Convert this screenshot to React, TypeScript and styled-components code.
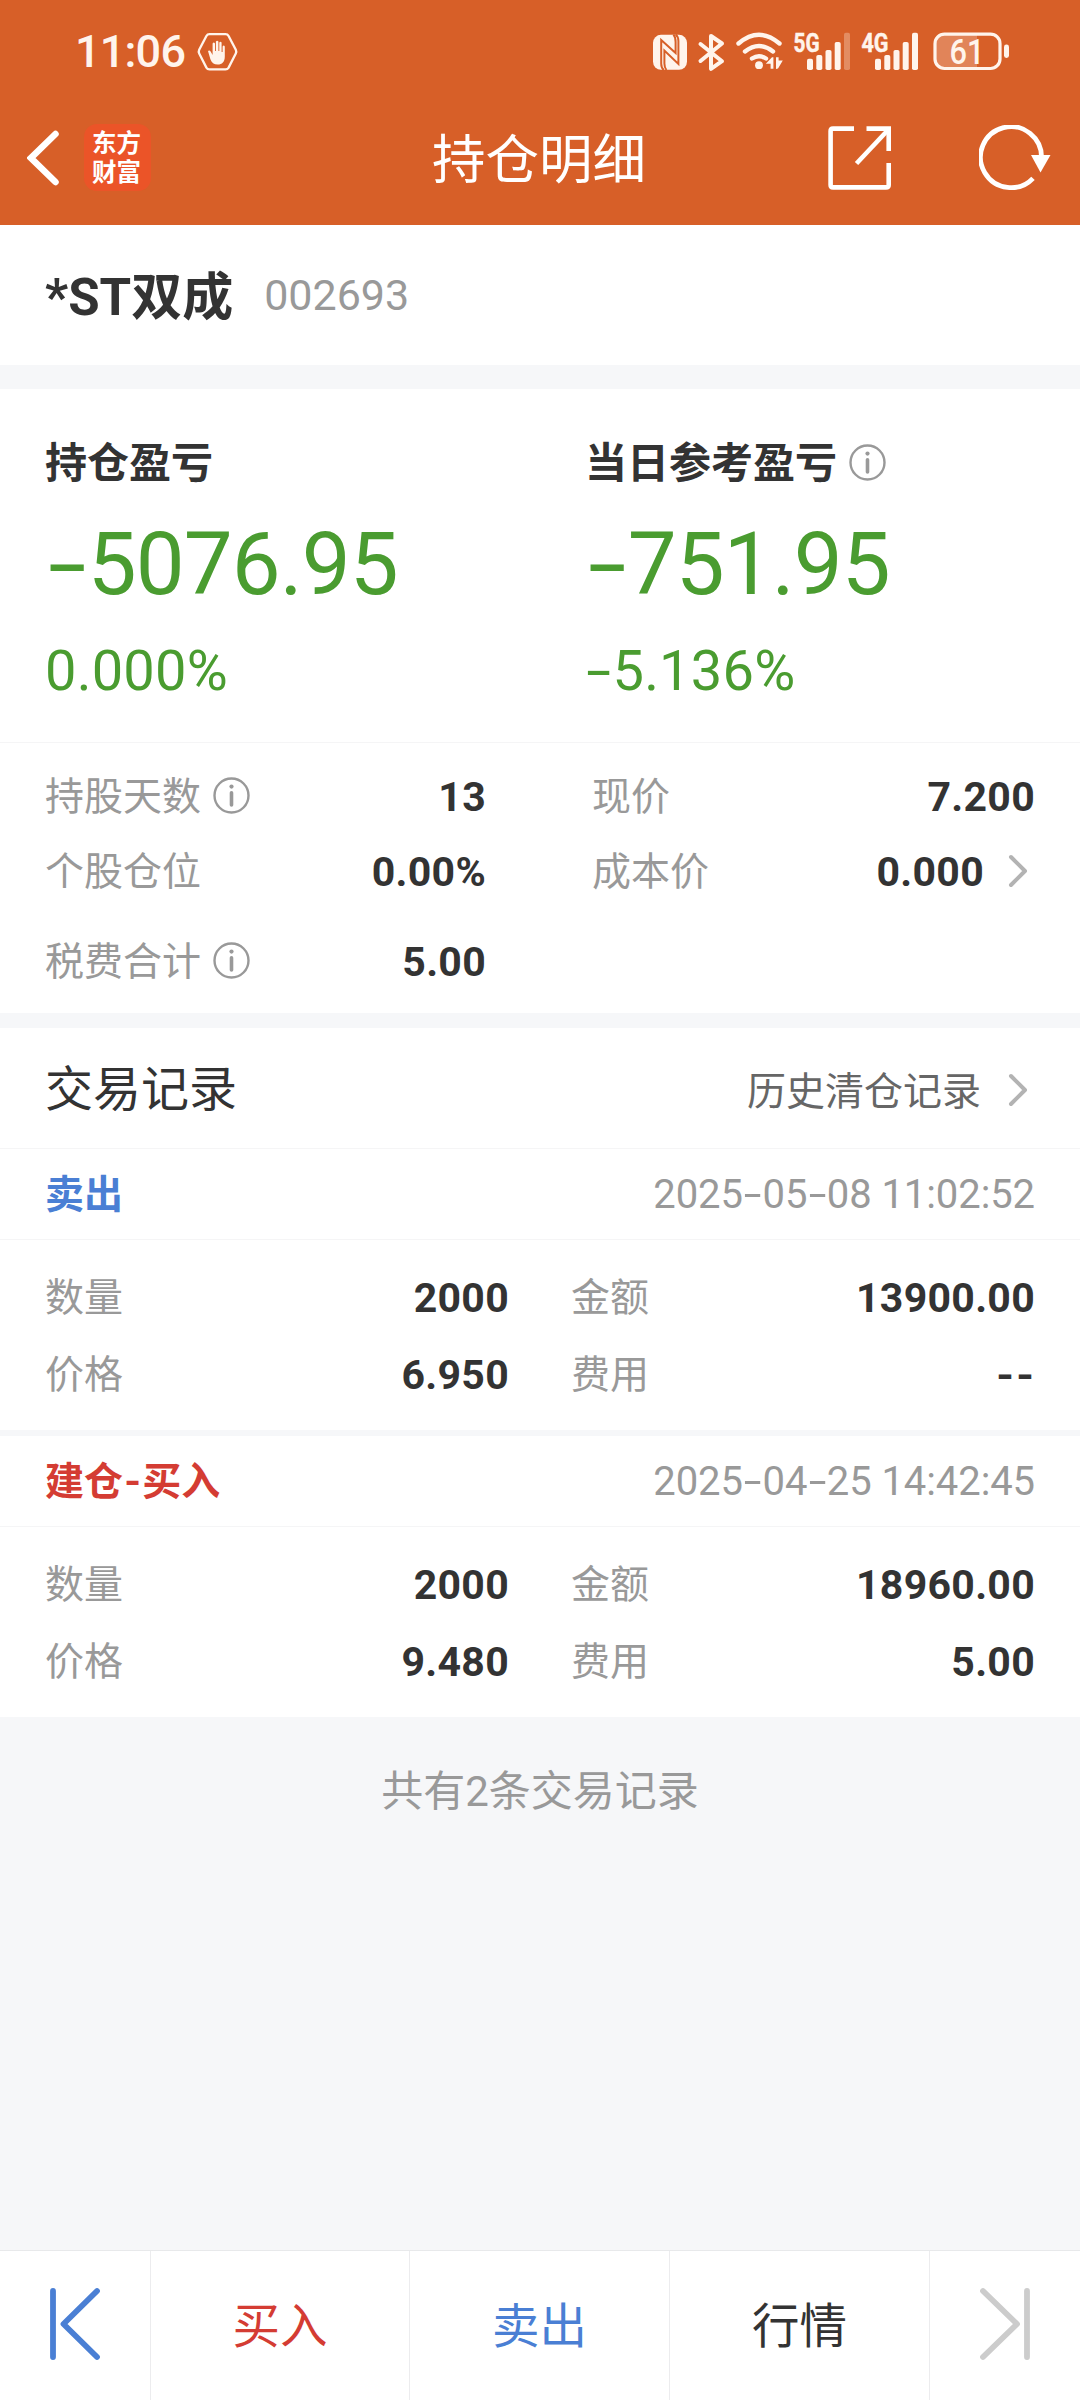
import React from "react";
import styled, { createGlobalStyle } from "styled-components";

const colors = {
  brand: "#d75f28",
  page: "#f6f7f9",
  ink: "#333333",
  muted: "#999999",
  link: "#666666",
  line: "#f5f5f6",
  green: "#4a9c30",
  blue: "#4a7fd4",
  red: "#d43c33",
  status: "#fff4ec",
};

const GlobalStyle = createGlobalStyle`
  * { box-sizing: border-box; }
  body {
    margin: 0;
    background: ${colors.page};
    color: ${colors.ink};
    font-family: Roboto, "Noto Sans CJK SC", sans-serif;
  }
`;

const Screen = styled.div`
  width: 1080px;
  height: 2400px;
  display: flex;
  flex-direction: column;
  background: ${colors.page};
  overflow: hidden;
`;

const Header = styled.header`
  height: 225px;
  background: ${colors.brand};
  display: flex;
  flex-direction: column;
  color: #fff;
`;

const StatusBar = styled.div`
  height: 103px;
  padding: 0 71px 0 75px;
  display: flex;
  justify-content: space-between;
  align-items: center;
`;

const StatusGroup = styled.div`
  display: flex;
  align-items: center;
  color: ${colors.status};
`;

const Clock = styled.span`
  font-size: 45px;
  font-weight: 500;
  line-height: 60px;
  letter-spacing: -0.8px;
  margin-right: 12px;
`;

const NavBar = styled.div`
  flex: 1;
  display: grid;
  grid-template-columns: 1fr auto 1fr;
  align-items: center;
  padding: 0 29px 13px 27px;
`;

const NavSide = styled.div<{ $end?: boolean }>`
  display: flex;
  align-items: center;
  justify-content: ${(p) => (p.$end ? "flex-end" : "flex-start")};
  gap: ${(p) => (p.$end ? "87px" : "25px")};
`;

const NavTitle = styled.h1`
  margin: 6px 0 0;
  font-size: 53.5px;
  line-height: 70px;
  font-weight: 400;
`;

const BrandLogo = styled.div`
  width: 67px;
  height: 67px;
  padding-right: 2px;
  border-radius: 13px;
  background: #eb5428;
  display: flex;
  flex-direction: column;
  align-items: center;
  justify-content: center;
  font-size: 24.5px;
  line-height: 29px;
  font-weight: 700;
`;

const StockBar = styled.section`
  height: 140px;
  background: #fff;
  padding: 0 45px;
  display: flex;
  align-items: center;
`;

const StockName = styled.h2`
  margin: 5px 0 0;
  font-size: 51px;
  line-height: 70px;
  font-weight: 700;
`;

const StockCode = styled.span`
  margin-left: 31px;
  font-size: 43px;
  line-height: 60px;
  color: ${colors.muted};
`;

const Gap = styled.div<{ $size: number }>`
  height: ${(p) => p.$size}px;
  background: ${colors.page};
`;

const ProfitSection = styled.section`
  height: 354px;
  padding: 45px 45px 0;
  background: #fff;
  border-bottom: 1px solid ${colors.line};
  display: grid;
  grid-template-columns: 540px 1fr;
`;

const ProfitLabel = styled.div`
  display: flex;
  align-items: center;
  font-size: 42px;
  line-height: 60px;
  font-weight: 700;
  svg { margin: 0 0 3px 12px; }
`;

const ProfitAmount = styled.div`
  margin-top: 20px;
  font-size: 87px;
  line-height: 100px;
  letter-spacing: -0.9px;
  color: ${colors.green};
`;

const ProfitRate = styled.div`
  margin-top: 27px;
  font-size: 56px;
  line-height: 60px;
  letter-spacing: 0.2px;
  color: ${colors.green};
`;

const DashBox = styled.span`
  display: inline-block;
  width: 0.49em;
  text-align: center;
`;

const DashMark = styled.span<{ $stretch: number }>`
  display: inline-block;
  transform: scaleX(${(p) => p.$stretch});
`;

const StatsSection = styled.section`
  height: 270px;
  padding: 16px 45px 0;
  background: #fff;
`;

const StatsRow = styled.div<{ $spaced?: boolean }>`
  display: grid;
  grid-template-columns: 441px 443px;
  justify-content: space-between;
  margin-top: ${(p) => (p.$spaced ? 15 : 0)}px;
`;

const Field = styled.div<{ $height?: number }>`
  height: ${(p) => p.$height ?? 75}px;
  display: flex;
  align-items: center;
  justify-content: space-between;
`;

const FieldLabel = styled.span`
  display: flex;
  align-items: center;
  font-size: 39px;
  line-height: 56px;
  color: ${colors.muted};
  svg { margin: 0 0 3px 12px; }
`;

const FieldValue = styled.span`
  display: flex;
  align-items: center;
  font-size: 41px;
  line-height: 54px;
  font-weight: 700;
  letter-spacing: 0.3px;
  svg { margin: 0 7px 2px 24px; }
`;

const RecordsHeader = styled.div`
  height: 121px;
  padding: 4px 45px 0;
  background: #fff;
  border-bottom: 1px solid ${colors.line};
  display: flex;
  align-items: center;
  justify-content: space-between;
`;

const RecordsTitle = styled.h3`
  margin: 0;
  font-size: 48px;
  line-height: 64px;
  font-weight: 400;
`;

const HistoryLink = styled.a`
  display: flex;
  align-items: center;
  padding-top: 3px;
  font-size: 39px;
  line-height: 56px;
  color: ${colors.link};
  svg { margin: 0 7px 4px 27px; }
`;

const RecordHead = styled.div`
  height: 91px;
  padding: 0 45px;
  background: #fff;
  border-bottom: 1px solid ${colors.line};
  display: flex;
  align-items: center;
  justify-content: space-between;
`;

const RecordType = styled.span<{ $color: string }>`
  padding-top: 2px;
  font-size: 39px;
  line-height: 56px;
  font-weight: 700;
  color: ${(p) => p.$color};
`;

const RecordTime = styled.time`
  padding-top: 2px;
  font-size: 40px;
  line-height: 56px;
  letter-spacing: -0.1px;
  color: ${colors.muted};
`;

const RecordBody = styled.div`
  height: 190px;
  padding: 19px 45px 0;
  background: #fff;
  display: grid;
  grid-template-columns: 464px 464px;
  grid-auto-rows: 77px;
  justify-content: space-between;
`;

const Summary = styled.p`
  flex: 1;
  margin: 0;
  padding-top: 45px;
  text-align: center;
  font-size: 42px;
  line-height: 60px;
  color: ${colors.muted};
`;

const TabBar = styled.nav`
  height: 150px;
  background: #fff;
  border-top: 1px solid #e8e9eb;
  display: grid;
  grid-template-columns: 151px 259px 260px 260px 150px;
`;

const Tab = styled.button<{ $color?: string }>`
  border: 0;
  border-right: 1px solid #ececee;
  padding: 2px 0 0;
  background: transparent;
  display: flex;
  align-items: center;
  justify-content: center;
  font-family: inherit;
  font-size: 47.5px;
  line-height: 64px;
  color: ${(p) => p.$color ?? colors.ink};
  svg { margin-bottom: 6px; }
  &:last-child { border-right: 0; }
`;

/** Figures with the wide dash used by the trading pages. */
const Figure = ({ text, stretch = 1.6 }: { text: string; stretch?: number }) => (
  <span>
    {text.split("").map((ch, i) =>
      ch === "-" ? (
        <DashBox key={i}>
          <DashMark $stretch={stretch}>-</DashMark>
        </DashBox>
      ) : (
        ch
      )
    )}
  </span>
);

const InfoIcon = () => (
  <svg width="37" height="37" viewBox="0 0 37 37" fill="none">
    <circle cx="18.5" cy="18.5" r="17" stroke="#999" strokeWidth="2.4" />
    <circle cx="18.5" cy="9.6" r="2.1" fill="#999" />
    <path d="M18.5 15.8V28" stroke="#999" strokeWidth="3.6" strokeLinecap="round" />
  </svg>
);

const ChevronIcon = () => (
  <svg width="20" height="34" viewBox="0 0 20 34" fill="none">
    <path d="M3 3L17 17L3 31" stroke="#b3b3b3" strokeWidth="4" strokeLinecap="round" strokeLinejoin="round" />
  </svg>
);

const BackIcon = () => (
  <svg width="32" height="56" viewBox="0 0 32 56" fill="none">
    <path d="M28.5 4L4 28L28.5 52" stroke="#fff" strokeWidth="6.5" strokeLinecap="round" />
  </svg>
);

const ShareIcon = () => (
  <svg width="64" height="64" viewBox="0 0 64 64" fill="none" stroke="#fff" strokeWidth="4.6">
    <path d="M26 2.6H5Q2.6 2.6 2.6 5V59Q2.6 61.4 5 61.4H58Q60.7 61.4 60.7 59V37" />
    <path d="M38.5 2.6H60.7V25" />
    <path d="M28.5 37.5L60 4" />
  </svg>
);

const RefreshIcon = () => (
  <svg width="72" height="66" viewBox="0 0 72 66" fill="none">
    <path d="M54 53.3A30.5 30.5 0 1 1 62.5 33" stroke="#fff" strokeWidth="4.8" />
    <path d="M52 30H71.5L61.5 47.5Z" fill="#fff" />
  </svg>
);

const PalmIcon = () => (
  <svg width="41" height="40" viewBox="0 0 41 40" fill="none">
    <path
      d="M12.5 2.2H28.5Q30.6 2.2 31.6 4L38.8 17.8Q39.7 19.7 38.8 21.5L31.6 35.6Q30.6 37.4 28.5 37.4H12.5Q10.4 37.4 9.4 35.6L2.2 21.5Q1.3 19.7 2.2 17.8L9.4 4Q10.4 2.2 12.5 2.2Z"
      stroke={colors.status}
      strokeWidth="2.3"
    />
    <path
      d="M11 19Q12.5 17.8 13.8 19.8L15.6 23V11.5Q16.8 9.6 18 11.5V19H18.9V9.6Q20.2 7.8 21.4 9.6V19H22.3V10.6Q23.5 9 24.6 10.6V20H25.6V14.4Q26.8 12.8 27.8 14.4V24.5C27.8 30 25 32.6 20.8 32.6C16.8 32.6 14.6 30.6 13.4 27.2Z"
      fill={colors.status}
    />
  </svg>
);

/** NFC, Bluetooth, Wi-Fi, two mobile signals and the battery, left to right. */
const SystemIcons = () => (
  <svg width="358" height="62" viewBox="0 -10 358 62" fill="none">
    <rect x="2" y="3.8" width="34" height="35" rx="8" fill={colors.status} />
    <path d="M12.8 39Q10.2 37 10.2 32.5V9L24.6 22V11Q24.6 6 22.4 3.6" stroke={colors.brand} strokeWidth="2" />
    <path d="M15.4 39Q13.4 36.5 13.4 32.5V19.5L27.4 33V10Q27.4 5.5 24.6 3.6" stroke={colors.brand} strokeWidth="2" />

    <path
      d="M49.5 13L71 30.2L60 37.8V5L71 12.5L49.5 30"
      stroke={colors.status}
      strokeWidth="4"
      strokeLinecap="round"
      strokeLinejoin="round"
    />

    <g stroke={colors.status} strokeWidth="4.4" strokeLinecap="round">
      <path d="M87.5 12.5Q108 -5 128.5 12.5" />
      <path d="M94 20.5Q108 9.5 122 20.5" />
      <path d="M101 27.5Q108 23.2 115 27.5" />
    </g>
    <circle cx="108" cy="34.2" r="3.9" fill={colors.status} />
    <path d="M114.8 32.8L121 26.2H122.4V37.8H119.6V32.8Z" fill={colors.status} />
    <path d="M125 26.2H127.6V29.6H131.8L127.2 37.2Q126.4 38 125 38Z" fill={colors.status} />

    <g fill={colors.status} stroke={colors.status} strokeWidth="0.5" fontFamily="Roboto" fontWeight="700" fontSize="25.5">
      <text x="142.5" y="20.5" textLength="26" lengthAdjust="spacingAndGlyphs">5G</text>
      <text x="210.5" y="20.5" textLength="27" lengthAdjust="spacingAndGlyphs">4G</text>
    </g>
    <g fill={colors.status}>
      <rect x="156" y="27.8" width="6" height="11.2" rx="1.8" />
      <rect x="165.3" y="24" width="6" height="15" rx="1.8" />
      <rect x="174.5" y="19" width="6" height="20" rx="1.8" />
      <rect x="183.7" y="11" width="6" height="28" rx="1.8" />
      <rect x="193" y="1.7" width="6" height="37.3" rx="1.8" opacity="0.3" />
      <rect x="224" y="27.8" width="6" height="11.2" rx="1.8" />
      <rect x="233.3" y="24" width="6" height="15" rx="1.8" />
      <rect x="242.5" y="19" width="6" height="20" rx="1.8" />
      <rect x="251.7" y="11" width="6" height="28" rx="1.8" />
      <rect x="261" y="1.7" width="6" height="37.3" rx="1.8" />
    </g>

    <path d="M291 3.5H326V37.5H291Q284 37.5 284 30V11.5Q284 3.5 291 3.5Z" fill={colors.status} opacity="0.25" />
    <rect x="284" y="3.2" width="65" height="34.3" rx="9.5" stroke={colors.status} strokeWidth="3.2" />
    <rect x="353" y="13.5" width="5" height="13.5" rx="2.4" fill={colors.status} />
    <text
      x="298.5"
      y="32.6"
      fontFamily="Roboto"
      fontWeight="500"
      fontSize="35"
      textLength="35"
      lengthAdjust="spacingAndGlyphs"
      fill={colors.status}
    >
      61
    </text>
  </svg>
);

const StepIcon = ({ forward }: { forward?: boolean }) => (
  <svg
    width="52"
    height="74"
    viewBox="0 0 52 74"
    fill="none"
    stroke={forward ? "#cccccc" : colors.blue}
    strokeWidth="5.8"
    strokeLinecap="round"
    strokeLinejoin="round"
  >
    {forward ? (
      <path d="M48 4V70M4 4L38 37L4 70" />
    ) : (
      <path d="M4 4V70M48 4L14.5 37L48 70" />
    )}
  </svg>
);

interface TradeRecord {
  type: string;
  color: string;
  time: string;
  fields: [string, string][];
}

const records: TradeRecord[] = [
  {
    type: "卖出",
    color: colors.blue,
    time: "2025-05-08 11:02:52",
    fields: [["数量", "2000"], ["金额", "13900.00"], ["价格", "6.950"], ["费用", "--"]],
  },
  {
    type: "建仓-买入",
    color: colors.red,
    time: "2025-04-25 14:42:45",
    fields: [["数量", "2000"], ["金额", "18960.00"], ["价格", "9.480"], ["费用", "5.00"]],
  },
];

interface StatProps {
  label: string;
  value: string;
  info?: boolean;
  more?: boolean;
  height?: number;
}

const Stat = ({ label, value, info, more, height }: StatProps) => (
  <Field $height={height}>
    <FieldLabel>
      {label}
      {info && <InfoIcon />}
    </FieldLabel>
    <FieldValue>
      <Figure text={value} stretch={1.1} />
      {more && <ChevronIcon />}
    </FieldValue>
  </Field>
);

export default function App() {
  return (
    <>
      <GlobalStyle />
      <Screen>
        <Header>
          <StatusBar>
            <StatusGroup>
              <Clock>11:06</Clock>
              <PalmIcon />
            </StatusGroup>
            <StatusGroup>
              <SystemIcons />
            </StatusGroup>
          </StatusBar>
          <NavBar>
            <NavSide>
              <BackIcon />
              <BrandLogo>
                <span>东方</span>
                <span>财富</span>
              </BrandLogo>
            </NavSide>
            <NavTitle>持仓明细</NavTitle>
            <NavSide $end>
              <ShareIcon />
              <RefreshIcon />
            </NavSide>
          </NavBar>
        </Header>

        <StockBar>
          <StockName>*ST双成</StockName>
          <StockCode>002693</StockCode>
        </StockBar>
        <Gap $size={24} />

        <ProfitSection>
          <div>
            <ProfitLabel>持仓盈亏</ProfitLabel>
            <ProfitAmount><Figure text="-5076.95" /></ProfitAmount>
            <ProfitRate>0.000%</ProfitRate>
          </div>
          <div>
            <ProfitLabel>当日参考盈亏<InfoIcon /></ProfitLabel>
            <ProfitAmount><Figure text="-751.95" /></ProfitAmount>
            <ProfitRate><Figure text="-5.136%" /></ProfitRate>
          </div>
        </ProfitSection>

        <StatsSection>
          <StatsRow>
            <Stat label="持股天数" value="13" info />
            <Stat label="现价" value="7.200" />
          </StatsRow>
          <StatsRow>
            <Stat label="个股仓位" value="0.00%" />
            <Stat label="成本价" value="0.000" more />
          </StatsRow>
          <StatsRow $spaced>
            <Stat label="税费合计" value="5.00" info />
          </StatsRow>
        </StatsSection>
        <Gap $size={15} />

        <RecordsHeader>
          <RecordsTitle>交易记录</RecordsTitle>
          <HistoryLink>历史清仓记录<ChevronIcon /></HistoryLink>
        </RecordsHeader>
        {records.map((record, i) => (
          <React.Fragment key={record.time}>
            {i > 0 && <Gap $size={6} />}
            <RecordHead>
              <RecordType $color={record.color}><Figure text={record.type} stretch={1.1} /></RecordType>
              <RecordTime><Figure text={record.time} /></RecordTime>
            </RecordHead>
            <RecordBody>
              {record.fields.map(([label, value]) => (
                <Stat key={label} label={label} value={value} height={77} />
              ))}
            </RecordBody>
          </React.Fragment>
        ))}

        <Summary>共有2条交易记录</Summary>

        <TabBar>
          <Tab><StepIcon /></Tab>
          <Tab $color={colors.red}>买入</Tab>
          <Tab $color={colors.blue}>卖出</Tab>
          <Tab>行情</Tab>
          <Tab><StepIcon forward /></Tab>
        </TabBar>
      </Screen>
    </>
  );
}
